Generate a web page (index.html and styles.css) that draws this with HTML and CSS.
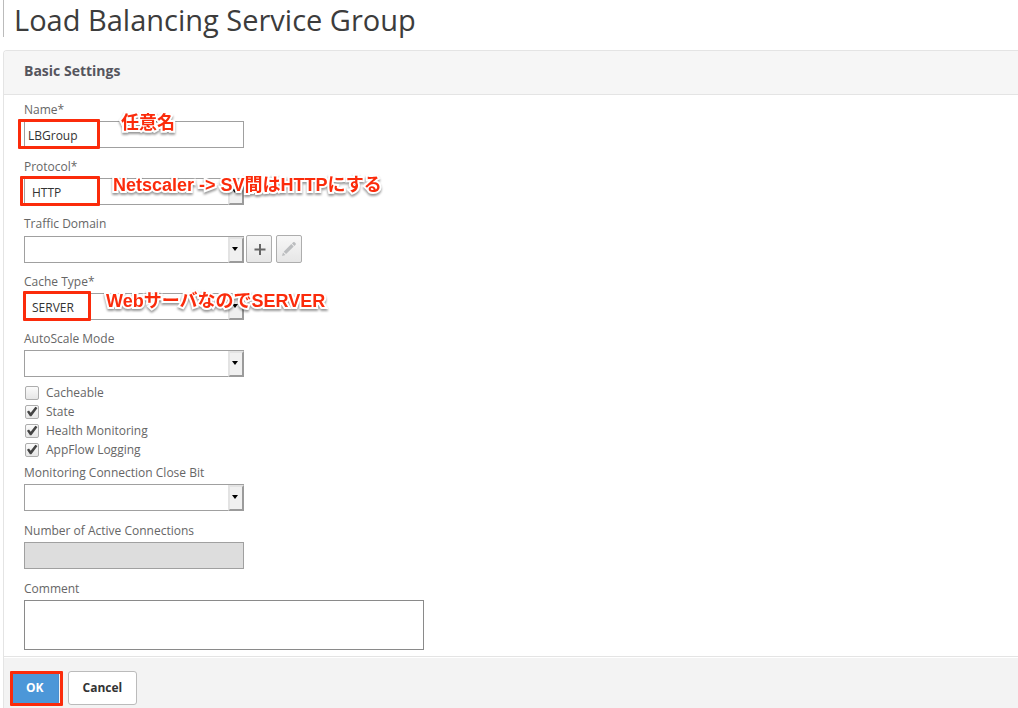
FILE: index.html
```html
<!DOCTYPE html>
<html lang="ja">
<head>
  <meta charset="UTF-8">
  <meta name="viewport" content="width=device-width, initial-scale=1.0">
  <title>Load Balancing Service Group</title>
  <link rel="stylesheet" href="styles.css">
</head>
<body>
  <h1 class="title">Load Balancing Service Group</h1>
  <form class="panel">
    <h2 class="panel-head">Basic Settings</h2>
    <div class="panel-body">
      <div class="group">
        <div class="field">
          <label for="name">Name*</label>
          <div class="control">
            <input class="text" type="text" id="name" value="LBGroup">
            <span class="mark mark-name"></span>
            <span class="note note-name">任意名</span>
          </div>
        </div>
        <div class="field">
          <label for="protocol">Protocol*</label>
          <div class="control">
            <span class="drop"><select id="protocol"><option>HTTP</option></select></span>
            <span class="mark mark-protocol"></span>
            <span class="note note-protocol">Netscaler -&gt; SV間はHTTPにする</span>
          </div>
        </div>
        <div class="field">
          <label for="domain">Traffic Domain</label>
          <div class="control">
            <span class="drop"><select id="domain"><option></option></select></span>
            <button class="tool" type="button" aria-label="Add">
              <svg width="14" height="14" viewBox="0 0 14 14"><path d="M8 2v11M2.500 7.500h11" stroke="#666" stroke-width="2"/></svg>
            </button>
            <button class="tool" type="button" aria-label="Edit" disabled>
              <svg width="16" height="16" viewBox="0 0 16 16" fill="#bbbdbf"><path d="M1 15l1-3.400 2.400 2.400zM2.700 10.700l7.600-7.600 2.400 2.400-7.600 7.600zM11 2.400l1.200-1.200q.8-.6 1.400 0l1 1q.6.800 0 1.500l-1.200 1.200z"/></svg>
            </button>
          </div>
        </div>
        <div class="field">
          <label for="cache">Cache Type*</label>
          <div class="control">
            <span class="drop"><select id="cache"><option>SERVER</option></select></span>
            <span class="mark mark-cache"></span>
            <span class="note note-cache">WebサーバなのでSERVER</span>
          </div>
        </div>
        <div class="field">
          <label for="scale">AutoScale Mode</label>
          <div class="control">
            <span class="drop"><select id="scale"><option></option></select></span>
          </div>
        </div>
      </div>
      <div class="checks">
        <label class="check"><input type="checkbox">Cacheable</label>
        <label class="check"><input type="checkbox" checked>State</label>
        <label class="check"><input type="checkbox" checked>Health Monitoring</label>
        <label class="check"><input type="checkbox" checked>AppFlow Logging</label>
      </div>
      <div class="group group-last">
        <div class="field">
          <label for="close">Monitoring Connection Close Bit</label>
          <div class="control">
            <span class="drop"><select id="close"><option></option></select></span>
          </div>
        </div>
        <div class="field">
          <label for="active">Number of Active Connections</label>
          <div class="control">
            <input class="text" type="text" id="active" disabled>
          </div>
        </div>
        <div class="field">
          <label for="comment">Comment</label>
          <textarea class="comment" id="comment"></textarea>
        </div>
      </div>
    </div>
    <div class="panel-foot">
      <span class="ok-wrap">
        <button class="btn ok" type="submit">OK</button>
        <span class="mark mark-ok"></span>
      </span>
      <button class="btn cancel" type="button">Cancel</button>
    </div>
  </form>
</body>
</html>
```
FILE: styles.css
```css
*,
*::before,
*::after{
  box-sizing: border-box;
}
body{
  margin:0 0 0 3px;
  background-color: #fff;
  color:#666;
  font:12px/16px "Open Sans", "Noto Sans CJK JP", sans-serif;
}
input,select,textarea,button{
  font:inherit;
  margin:0;
}
.title{
  height:37px;
  margin:0 0 13px;
  padding-left:10px;
  border-left:1px solid #bbb;
  color:#3c3c3c;
  font-size:29px;
  font-weight:400;
  line-height:40px;
  white-space: nowrap;
}
.panel{
  margin:0;
  border:1px solid #e4e4e4;
  border-width:1px 0 0 1px;
  border-radius:4px 0 0 0;
}
.panel-head{
  margin:0;
  padding:10px 20px 13px;
  background-color: #f6f6f6;
  border-bottom:1px solid #e4e4e4;
  border-radius:3px 0 0 0;
  color:#55555d;
  font-size:14px;
  font-weight:700;
  line-height:20px;
}
.panel-body{
  display:flex;
  flex-direction: column;
  gap:6px;
  padding:7px 20px 6px;
}
.group{
  display:flex;
  flex-direction: column;
  gap:11px;
}
.group-last{
  gap:12px;
}
.field{
  display:flex;
  flex-direction: column;
  align-items:flex-start;
  gap:3px;
}
.control{
  position: relative;
  display:flex;
  align-items:flex-end;
}
.text,
.drop{
  width:220px;
  height:27px;
}
.text{
  padding:2px 3px 0;
  border:1px solid #a0a0a0;
  border-radius:0;
  background-color: #fff;
  color:#333;
}
.text:disabled{
  background-color: #ddd;
}
.drop{
  position: relative;
}
.drop select{
  appearance: none;
  width:100%;
  height:100%;
  padding:2px 20px 0 7px;
  border:1px solid #a0a0a0;
  border-radius:0;
  background-color: #fff;
  color:#333;
}
/* 下拉按钮 */
.drop::before{
  content:"";
  position: absolute;
  right:0;
  top:1px;
  width:16px;
  height:26px;
  border:2px solid;
  border-color:#e3e3e3 #9b9b9b #9b9b9b #e3e3e3;
  background-color: #f0f0f0;
  pointer-events: none;
}
.drop::after{
  content:"";
  position: absolute;
  right:6px;
  top:11px;
  border:3px solid transparent;
  border-top:4px solid #000;
  border-bottom:0;
  pointer-events: none;
}
.tool{
  display:flex;
  justify-content:center;
  align-items:center;
  width:26px;
  height:28px;
  margin-left:2px;
  padding:0;
  border:1px solid #adadad;
  border-radius:2px;
  background:linear-gradient(#f7f7f7, #e6e6e6);
}
.tool + .tool{
  margin-left:4px;
}
.checks{
  display:flex;
  flex-direction: column;
  align-items:flex-start;
}
.check{
  display:flex;
  align-items:center;
  gap:7px;
  height:19px;
  padding-left:1px;
}
.check input{
  appearance: none;
  display:flex;
  width:14px;
  height:14px;
  border:1px solid #adadad;
  border-radius:2px;
  background:linear-gradient(#fbfbfb, #e6e6e6);
}
.check input:checked::before{
  content:"";
  width:12px;
  height:12px;
  background-color: #444;
  clip-path: polygon(8% 52%, 25% 42%, 39% 61%, 78% 10%, 96% 20%, 45% 90%, 33% 90%);
}
.comment{
  width:400px;
  height:50px;
  padding:3px;
  border:1px solid #8a8a8a;
  border-radius:0;
  resize: none;
}
.panel-foot{
  display:flex;
  gap:9px;
  padding:14px 7px 3px;
  border-top:1px solid #e4e4e4;
  background-color: #f3f3f3;
  box-shadow: inset 0 1px #fff;
}
.ok-wrap{
  position: relative;
}
.btn{
  height:34px;
  padding:0 14px;
  border:1px solid #bbb;
  border-radius:3px;
  font-weight:700;
}
.ok{
  border-color:#4a90d0;
  background-color: #4c97d8;
  color:#fff;
}
.cancel{
  background-color: #fff;
  color:#333;
}
/* 红色标注框 */
.mark{
  position: absolute;
  border:3px solid #fb2b0b;
  border-radius:1px;
  pointer-events: none;
}
.mark-name{
  left:-6px;
  top:-2px;
  width:82px;
  height:30px;
}
.mark-protocol{
  left:-4px;
  top:-2px;
  width:80px;
  height:30px;
}
.mark-cache{
  left:-1px;
  top:-2px;
  width:68px;
  height:30px;
}
.mark-ok{
  left:-1px;
  top:0;
  width:53px;
  height:35px;
}
/* 白色描边的说明文字 */
.note{
  position: absolute;
  color:#fb2b0b;
  font:700 18px/24px "Liberation Sans", "Noto Sans CJK JP", sans-serif;
  white-space: nowrap;
  -webkit-text-stroke:4px #fff;
  paint-order: stroke fill;
  filter: drop-shadow(0 2px 1px rgba(0,0,0,.4));
  pointer-events: none;
}
.note-name{
  left:97px;
  top:-10px;
}
.note-protocol{
  left:89px;
  top:-5px;
}
.note-cache{
  left:82px;
  top:-4px;
}
```
